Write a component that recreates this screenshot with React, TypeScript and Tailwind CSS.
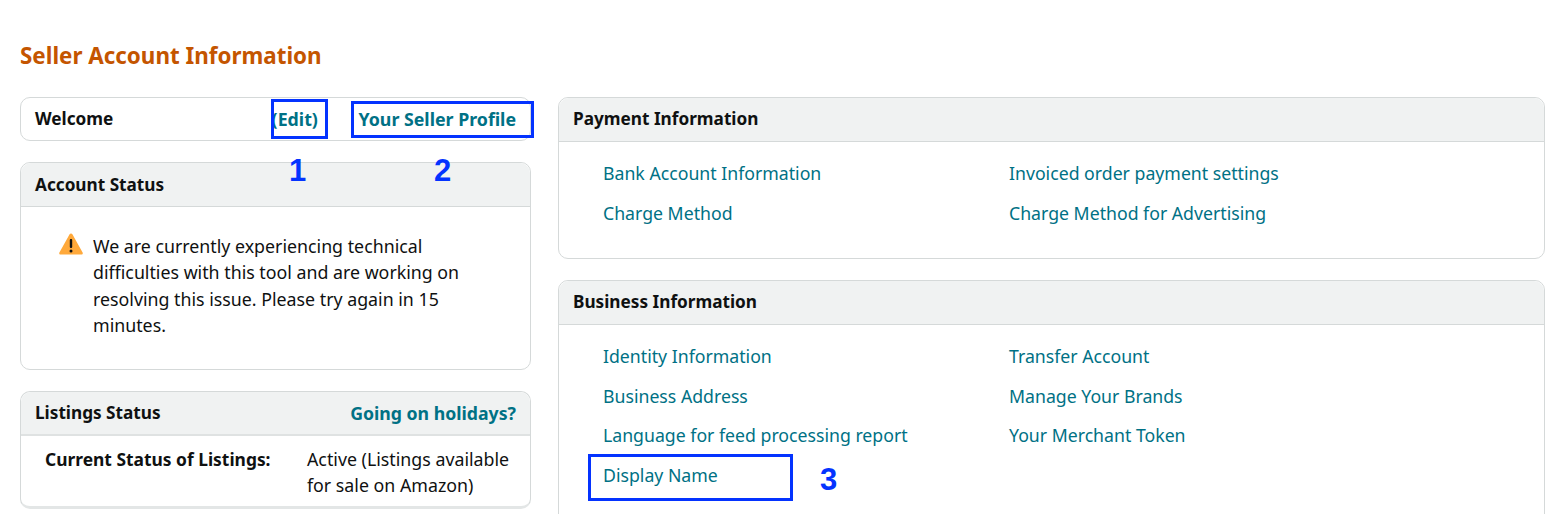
import React from 'react'

const font = { fontFamily: '"Noto Sans", sans-serif' }

function CardHeader({ title, className, children }: { title: string; className?: string; children?: React.ReactNode }) {
  return (
    <div className={`flex h-[44px] items-center justify-between border-b bg-[#f0f2f2] px-[14px] rounded-t-[10px] ${className ?? 'border-[#d5d9d9]'}`}>
      <span className="text-[17.2px] font-bold text-[#0f1111]">{title}</span>
      {children}
    </div>
  )
}

function LinkColumn({ links, width }: { links: string[]; width: string }) {
  return (
    <div className={`flex flex-col gap-[14.6px] ${width}`}>
      {links.map(l => (
        <a key={l} className="h-[25px] text-[17.7px] leading-[25px] text-[#007185] whitespace-nowrap">{l}</a>
      ))}
    </div>
  )
}

function Marker({ className, label, labelClass }: { className: string; label: string; labelClass: string }) {
  return (
    <>
      <div className={`absolute border-[3px] border-[#0433ff] ${className}`} />
      <span className={`absolute text-[31px] leading-none font-bold text-[#0433ff] ${labelClass}`} style={{ fontFamily: '"Liberation Sans", sans-serif' }}>{label}</span>
    </>
  )
}

export default function App() {
  return (
    <div className="relative h-[514px] w-[1556px] overflow-hidden bg-white pl-5 pt-[42px]" style={font}>
      <h1 className="h-[28px] text-[22.4px] leading-[28px] font-bold text-[#c45500]">Seller Account Information</h1>

      <div className="mt-[27px] flex gap-[27px]">
        {/* left column */}
        <div className="flex w-[511px] flex-col gap-[21px]">
          <div className="flex h-[44px] items-center rounded-[10px] border border-[#d5d9d9] px-[14px] whitespace-nowrap">
            <span className="w-[237px] text-[17.2px] font-bold text-[#0f1111]">Welcome</span>
            <a className="w-[87px] text-[17.8px] font-bold text-[#007185]">(Edit)</a>
            <a className="text-[17.8px] font-bold text-[#007185]">Your Seller Profile</a>
          </div>

          <div className="h-[208px] rounded-[10px] border border-[#d5d9d9]">
            <CardHeader title="Account Status" />
            <div className="flex pl-[38px] pt-[26px] pr-[60px]">
              <svg viewBox="0 0 24 22" className="h-[22px] w-[24px] shrink-0">
                <path d="M12 0.5c.6 0 1.1.3 1.4.8l10.2 18.2c.5.9 0 2-1.2 2H1.6c-1.2 0-1.7-1.1-1.2-2L10.6 1.3c.3-.5.8-.8 1.4-.8z" fill="#ffa93b" />
                <rect x="10.8" y="6" width="2.4" height="9" rx="1" fill="#111" />
                <circle cx="12" cy="18" r="1.5" fill="#111" />
              </svg>
              <p className="ml-[10px] text-[17.8px] leading-[26.4px] text-[#0f1111]">
                We are currently experiencing technical difficulties with this tool and are working on resolving this issue. Please try again in 15 minutes.
              </p>
            </div>
          </div>

          <div className="h-[118px] rounded-[10px] border border-[#d5d9d9] border-b-[3px] border-b-[#e3e6e6]">
            <CardHeader title="Listings Status" className="border-b-2 border-[#dfe2e2]">
              <a className="text-[17.7px] font-bold text-[#007185]">Going on holidays?</a>
            </CardHeader>
            <div className="flex pt-[11px] pl-[24px] pr-[10px] text-[17.8px] leading-[25.5px] text-[#0f1111]">
              <span className="w-[262px] shrink-0 text-[17.4px] font-bold">Current Status of Listings:</span>
              <span>Active (Listings available for sale on Amazon)</span>
            </div>
          </div>
        </div>

        {/* right column */}
        <div className="flex w-[987px] flex-col gap-[21px]">
          <div className="h-[162px] rounded-[10px] border border-[#d5d9d9]">
            <CardHeader title="Payment Information" className="pb-[2px] border-[#d5d9d9]" />
            <div className="flex pl-[44px] pt-[19px]">
              <LinkColumn width="w-[406px]" links={['Bank Account Information', 'Charge Method']} />
              <LinkColumn width="" links={['Invoiced order payment settings', 'Charge Method for Advertising']} />
            </div>
          </div>

          <div className="h-[300px] rounded-[10px] border border-[#d5d9d9]">
            <CardHeader title="Business Information" className="pb-[2px] border-[#d5d9d9]" />
            <div className="flex pl-[44px] pt-[19px]">
              <LinkColumn width="w-[406px]" links={['Identity Information', 'Business Address', 'Language for feed processing report', 'Display Name']} />
              <LinkColumn width="" links={['Transfer Account', 'Manage Your Brands', 'Your Merchant Token']} />
            </div>
          </div>
        </div>
      </div>

      {/* blue annotations drawn over the screenshot */}
      <Marker className="left-[271px] top-[99px] h-[40px] w-[57px]" label="1" labelClass="left-[289px] top-[155px]" />
      <Marker className="left-[351px] top-[101px] h-[37px] w-[183px]" label="2" labelClass="left-[434px] top-[155px]" />
      <Marker className="left-[588px] top-[454px] h-[47px] w-[205px]" label="3" labelClass="left-[820px] top-[464px]" />
    </div>
  )
}
